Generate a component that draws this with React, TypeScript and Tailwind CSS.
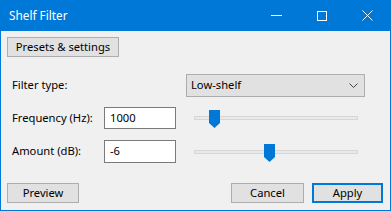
import React from "react";

const FONT = { fontFamily: '"Noto Sans", "Liberation Sans", sans-serif' };

function Thumb() {
  return (
    <svg width="11" height="18" viewBox="0 0 11 18" className="block">
      <path d="M0 0H11V13L5.5 18L0 13Z" fill="#0078d7" />
    </svg>
  );
}

function Slider({ offset }: { offset: number }) {
  return (
    <div className="relative w-[164px] h-[22px] flex items-center">
      <div className="w-full h-[4px] bg-[#e7eaea] border border-[#d6d6d6]" />
      <div className="absolute top-[3px]" style={{ left: offset }}>
        <Thumb />
      </div>
    </div>
  );
}

function Button({ label, width, primary }: { label: string; width: string; primary?: boolean }) {
  return (
    <button
      type="button"
      className={`${width} h-[20px] bg-[#e1e1e1] text-[11.2px] text-black flex items-center justify-center leading-none ${
        primary ? "border-2 border-[#0078d7]" : "border border-[#adadad]"
      }`}
    >
      {label}
    </button>
  );
}

export default function App() {
  return (
    <div className="w-[391px] h-[211px] flex flex-col bg-[#0078d7] overflow-hidden" style={FONT}>
      <div className="h-[31px] flex items-center shrink-0">
        <span className="pl-[9px] text-white text-[11.8px] flex-1">Shelf Filter</span>
        <div className="flex h-full">
          <div className="w-[46px] flex items-center justify-center">
            <div className="w-[11px] h-px bg-white" />
          </div>
          <div className="w-[46px] flex items-center justify-center">
            <div className="w-[10px] h-[10px] border border-white" />
          </div>
          <div className="w-[46px] flex items-center justify-center pr-[1px]">
            <svg width="11" height="11" viewBox="0 0 11 11">
              <path d="M0.5 0.5L10.5 10.5M10.5 0.5L0.5 10.5" stroke="white" strokeWidth="1" />
            </svg>
          </div>
        </div>
      </div>
      <div className="flex-1 mx-[1px] mb-[1px] bg-[#f0f0f0] flex flex-col text-[11.2px] text-black">
        <div className="pl-[6px] pt-[6px]">
          <Button label="Presets & settings" width="w-[112px]" />
        </div>

        <div className="mt-[17px] h-[23px] flex items-center">
          <span className="pl-[11px] w-[185px]">Filter type:</span>
          <div className="w-[179px] h-[23px] bg-[#e1e1e1] border border-[#adadad] flex items-center pl-[4px] pr-[6px]">
            <span className="flex-1">Low-shelf</span>
            <svg width="9" height="5" viewBox="0 0 9 5">
              <path d="M0.5 0.5L4.5 4.5L8.5 0.5" stroke="#444" fill="none" strokeWidth="1" />
            </svg>
          </div>
        </div>

        <div className="mt-[10px] h-[22px] flex items-center">
          <span className="pl-[11px] w-[103px]">Frequency (Hz):</span>
          <div className="w-[72px] h-[22px] bg-white border border-[#7a7a7a] flex items-center pl-[5px]">1000</div>
          <div className="ml-[18px]">
            <Slider offset={15} />
          </div>
        </div>

        <div className="mt-[11px] h-[23px] flex items-center">
          <span className="pl-[11px] w-[103px]">Amount (dB):</span>
          <div className="w-[72px] h-[23px] bg-white border border-[#7a7a7a] flex items-center pl-[5px]">-6</div>
          <div className="ml-[18px]">
            <Slider offset={70} />
          </div>
        </div>

        <div className="mt-[20px] flex items-center pl-[6px]">
          <Button label="Preview" width="w-[72px]" />
          <div className="flex-1" />
          <Button label="Cancel" width="w-[73px]" />
          <div className="w-[8px]" />
          <Button label="Apply" width="w-[71px]" primary />
          <div className="w-[7px]" />
        </div>
      </div>
    </div>
  );
}
